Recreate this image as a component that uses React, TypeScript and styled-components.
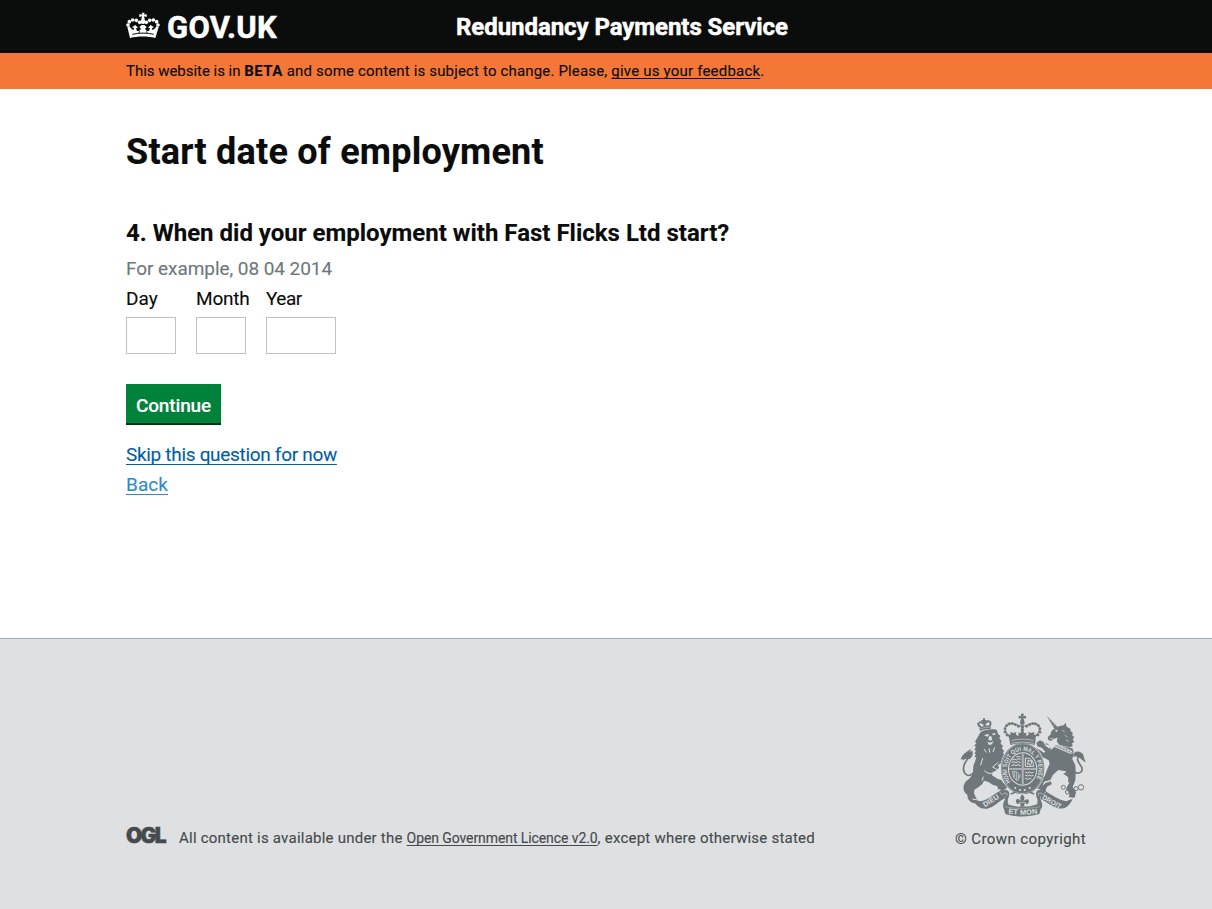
import React from "react";
import styled, { createGlobalStyle } from "styled-components";

const GlobalStyle = createGlobalStyle`
  * { box-sizing: border-box; }
  body {
    margin: 0;
    background: #fff;
    color: #0b0c0c;
    font-family: Roboto, "Liberation Sans", sans-serif;
    -webkit-text-stroke: 0.12px;
  }
`;

const Page = styled.div`
  display: flex;
  flex-direction: column;
  min-height: 909px;
`;

const Container = styled.div`
  width: 960px;
  margin: 0 auto;
`;

const Header = styled.header`
  height: 53px;
  background: #0b0c0c;
  color: #fff;
`;

const HeaderInner = styled(Container)`
  display: grid;
  grid-template-columns: 330px 1fr;
  align-items: center;
  height: 53px;
  padding-top: 2px;
`;

const Brand = styled.a`
  display: flex;
  align-items: center;
  gap: 7px;
  color: inherit;
  text-decoration: none;
  font-size: 31px;
  font-weight: 700;
  letter-spacing: 0.3px;
  line-height: 51px;
  white-space: nowrap;
  -webkit-text-stroke: 0.5px;

  svg {
    margin-bottom: 4px;
  }
`;

const ServiceName = styled.div`
  font-size: 24px;
  font-weight: 700;
  letter-spacing: -0.06px;
  line-height: 51px;
  white-space: nowrap;
  -webkit-text-stroke: 0.5px;
`;

const BetaBanner = styled.div`
  height: 36px;
  background: #f47738;
  font-size: 15px;
  line-height: 36px;
  letter-spacing: 0.16px;
  white-space: nowrap;

  strong {
    letter-spacing: 0.5px;
  }
`;

const Lead = styled.span`
  letter-spacing: -0.03px;
`;

const BannerLink = styled.a`
  color: inherit;
  letter-spacing: 0.2px;
  text-decoration: underline 1px;
  text-underline-offset: 2px;
  text-decoration-skip-ink: none;
`;

const Main = styled.main`
  flex: 1;
  padding-top: 43px;
`;

const Title = styled.h1`
  margin: 0 0 46px;
  font-size: 36px;
  font-weight: 700;
  line-height: 40px;
  letter-spacing: 0.22px;
`;

const Question = styled.h2`
  margin: 0 0 6px;
  font-size: 24px;
  font-weight: 700;
  line-height: 30px;
`;

const Hint = styled.p`
  margin: 0;
  color: #6f777b;
  font-size: 19px;
  line-height: 30px;
  letter-spacing: -0.06px;
`;

const DateFields = styled.div`
  display: flex;
  gap: 20px;
  margin-bottom: 30px;
`;

const Field = styled.label<{ $width: number; $tracking: number }>`
  display: flex;
  flex-direction: column;
  gap: 3px;
  width: ${(p) => p.$width}px;
  font-size: 19px;
  line-height: 30px;
  letter-spacing: ${(p) => p.$tracking}px;
  white-space: nowrap;
`;

const DateInput = styled.input`
  width: 100%;
  height: 37px;
  padding: 5px;
  border: 1px solid #bfc1c3;
  border-radius: 0;
  background: #fff;
  font: inherit;
`;

const ContinueButton = styled.button`
  display: block;
  width: 95px;
  height: 41px;
  margin: 0 0 15px;
  padding: 3px 0 0;
  border: 0;
  background: #00823b;
  box-shadow: inset 0 -2px 0 #003618;
  color: #fff;
  font-family: inherit;
  font-size: 19px;
  font-weight: 500;
  letter-spacing: -0.16px;
  line-height: 38px;
`;

const Actions = styled.nav`
  display: flex;
  flex-direction: column;
  align-items: flex-start;
`;

const ActionLink = styled.a<{ $color: string; $tracking: number }>`
  color: ${(p) => p.$color};
  font-size: 19px;
  line-height: 30px;
  letter-spacing: ${(p) => p.$tracking}px;
  text-decoration: underline 1px;
  text-underline-offset: 3px;
  text-decoration-skip-ink: none;
`;

const Footer = styled.footer`
  height: 271px;
  padding-top: 69px;
  border-top: 1px solid #a1acb2;
  background: #dee0e2;
  color: #454a4c;
  font-size: 15px;
  line-height: 20px;
`;

const FooterInner = styled(Container)`
  display: flex;
  justify-content: space-between;
  align-items: flex-end;
  white-space: nowrap;
`;

const Licence = styled.div`
  display: flex;
  align-items: baseline;
  letter-spacing: 0.23px;
  padding-bottom: 1px;
`;

const OglMark = styled.span`
  width: 53px;
  font-family: Inter, sans-serif;
  font-size: 21px;
  font-weight: 900;
  letter-spacing: -1.7px;
  line-height: 20px;
  -webkit-text-stroke: 0.5px #454a4c;
`;

const LicenceLink = styled.a`
  color: inherit;
  font-size: 14px;
  letter-spacing: -0.09px;
  text-decoration: underline 1px;
  text-underline-offset: 2px;
  text-decoration-skip-ink: none;
`;

const Copyright = styled.div`
  display: flex;
  flex-direction: column;
  align-items: flex-end;
  gap: 9px;
  letter-spacing: 0.4px;

  svg {
    margin-right: -4px;
  }
`;

const dots = (points: number[][], r: number, fill?: string) =>
  points.map(([x, y], i) => <circle key={i} cx={x} cy={y} r={r} fill={fill} />);

function CrownIcon() {
  return (
    <svg width="34" height="27" viewBox="0 0 102 81" fill="#fff">
      <path d="M47 2h9l-2 6 8-2v9l-8-2 2 8H46l2-8-8 2V6l9 2z" />
      <rect x="46" y="20" width="10" height="14" rx="4" />
      <circle cx="51" cy="29" r="7" />
      {dots([[41, 31], [31, 25], [20, 24], [10, 29], [6, 39], [61, 31], [71, 25], [82, 24], [92, 29], [96, 39]], 5.5)}
      <path d="M4 45l7-2c3 7 7 10 12 11l1-6-6-2 10-7 8 8-6 2 3 8c5 1 9-1 12-7l-5-5 7-6h8l7 6-5 5c3 6 7 8 12 7l3-8-6-2 8-8 10 7-6 2 1 6c5-1 9-4 12-11l7 2-10 33c-22-6-54-6-76 0z" />
      <path d="M19 67c20-5 44-5 64 0" fill="none" stroke="#0b0c0c" strokeWidth="3" />
      <path d="M36 62l4-5 3 4zM66 62l-4-5-3 4z" fill="#0b0c0c" />
    </svg>
  );
}

const INK = "#6f777b";
const PAPER = "#dee0e2";

function Lion() {
  return (
    <g>
      <path d="M58 182c-4 16-17 25-27 18-13-10-10-28 0-42 4-6 7-13 8-22" fill="none" stroke={INK} strokeWidth="5" />
      <path d="M14 155c3-13 12-22 33-33l-7 9 9-3c4 12-1 20-9 25-6 2-12-4-19 5 0-4-2-5-7-3z" />
      <path d="M74 72c14-8 31-10 48-7l4 12 7 7-3 7 7 9-4 5 8 10-4 6 7 7-3 8 6 5 1 11-8 11-14 8 3 8-9 9-10 4-2 10 16 10 12 4 6 9 11 7-1 9-11 6-15-3-2-9-14-5-14-9-12-3-5 10-12 10-12 7-1 11 6 14 9 10-6 8-18-5-9-10-2-12-8-8c-6-11-4-23 4-33 10-7 17-14 21-25l1-21 6-16 3-11-6 1 5-10-5-1 5-9-5-3 5-8-5-4 6-7-4-5z" />
      <path d="M84 82l10-4 6 3-6 5zM107 78l8-3 5 3-7 4z" fill={PAPER} />
      <path d="M99 85l7 0 3 10-6 3-6-3zM94 101l9 3 9-5-4 10-9 2z" fill={PAPER} />
      <path d="M127 163l-17 14 15 9 18-13M84 123l7 10M99 121l2 13M116 118l-5 14M80 150l-6 22M85 188c8 8 15 9 25 8M82 206l-4 12" stroke={PAPER} strokeWidth="3" fill="none" />
      <path d="M70 59c9-5 22-8 34-7v11c-12-1-23 1-32 6z" />
      <path d="M73 63c9-4 19-6 29-6" stroke={PAPER} strokeWidth="1.500" fill="none" />
      <path d="M75 58c-12-10-6-18 3-14l7 5 8-7c10-4 14 3 9 12" fill="none" stroke={INK} strokeWidth="4.500" />
      {dots([[68, 53], [66, 47], [72, 43], [78, 44], [91, 41], [97, 39], [103, 43], [103, 49]], 3)}
      <path d="M81 31h6v5h5v5h-5l3 15h-7l-2-15h-5v-5h5z" />
    </g>
  );
}

function Unicorn() {
  return (
    <g>
      <path d="M272 23l33 34-9 6z" />
      <path d="M283 32l-3 3M289 40l-3 4M296 48l-4 5" stroke={PAPER} strokeWidth="1.5" />
      <path d="M293 64l15-9 15-3 6-8 3 12 11 6 1 8 7 5-3 6 7 7-5 6 5 8-7 4 2 9-9 3-31-7-8-11 3-11-13 4-7 6-8-3-2-8 8-8 4-12z" />
      <path d="M298 68l6-2-2 5zM281 92l11-1M318 66l8 6M326 81l8 6M330 96l8 4" fill={PAPER} stroke={PAPER} strokeWidth="2" />
      <path d="M302 111l47 10 4 10-4 23 9 17 1 20-7 17-4 16-12-2 3-18-10-14-22-4-16 14-8 16-19 5-6 20-11 3-7-9 7-8 6-15 13-7 8-22 7-16-3-10-14-8-14-2-6-11-14-3-2-9 13-5 14 9 8 6 6-2-12-13-13-4-3-11 11-7 11 5 2 9 20 14z" />
      <path d="M268 225l17-5 2 9-14 7-5 14-14 2-2-9zM338 188l21 8-1 21-8 20 10 16-4 16-17-1 1-12-10-14 10-18-4-17-14-10z" />
      <path d="M298 107l49 22M295 116l48 20" fill="none" stroke={PAPER} strokeWidth="2.500" />
      {dots([[300, 113], [309, 117], [318, 121], [327, 125], [336, 129], [345, 133]], 4.2, PAPER)}
      {dots([[300, 113], [309, 117], [318, 121], [327, 125], [336, 129], [345, 133]], 2)}
      <path d="M355 192c17 10 29-4 20-18-8-12-15-20-6-30" fill="none" stroke={INK} strokeWidth="5" />
      <path d="M350 146c3-15 14-20 26-12 9 4 5 14 14 29-10-3-15-12-24-16-7-3-11-1-16-1z" />
      <g fill="none" stroke={INK} strokeWidth="3">
        <circle cx="322" cy="238" r="6" />
        <circle cx="334" cy="252" r="6" />
        <circle cx="360" cy="242" r="6" />
        <circle cx="375" cy="238" r="8" />
        <path d="M279 112a9 9 0 1 0-13 12M283 119a9 9 0 0 1-10 10" />
      </g>
    </g>
  );
}

function ShieldAndGarter() {
  return (
    <g>
      <ellipse cx="200" cy="182" rx="67" ry="79" fill={PAPER} />
      <ellipse cx="200" cy="182" rx="65" ry="77" />
      <ellipse cx="200" cy="182" rx="62.500" ry="74.500" fill="none" stroke={PAPER} strokeWidth="1.200" />
      <ellipse cx="200" cy="183" rx="44" ry="50" fill={PAPER} />
      <ellipse cx="200" cy="183" rx="41" ry="47" />
      <path d="M200 137v92M160 183h80" stroke={PAPER} strokeWidth="5" />
      <path d="M200 137v92M160 183h80" stroke={INK} strokeWidth="1.5" />
      <g fill="none" stroke={PAPER} strokeWidth="3">
        <path d="M169 156l6-3 6 3 5-4 8 2M167 164l7-3 6 3 6-3 8 3M166 173l8-3 6 3 6-3 8 3M181 147l6-2 6 2" />
        <path d="M208 150v25M208 151c17-3 24 8 25 24h-25" />
        <path d="M214 169l3-8-2-4 6 2 4-2 2 9-4 6-3-5z" />
        <path d="M169 191h13l11 12-9 16-11-11zM175 193v15M181 193v22M187 199v14" strokeWidth="2.2" />
        <path d="M207 192l7 3 6-3 6 3 7-2M207 201l7 3 6-3 6 3 6-2M207 211l7 3 6-3 6 2" />
      </g>
      <path id="garterPath" d="M164 222A47.500 57 0 1 1 236 222" fill="none" />
      <text fontSize="18" fontWeight="700" fill={PAPER} fontFamily="Liberation Sans, sans-serif">
        <textPath href="#garterPath" textLength="232" lengthAdjust="spacingAndGlyphs">HONI SOIT QUI MAL Y PENSE</textPath>
      </text>
      <g fill={PAPER}>{dots([[178, 240], [192, 246], [206, 246], [221, 240]], 3)}</g>
    </g>
  );
}

function RoyalCrown() {
  return (
    <g>
      <path d="M194 17h10l-2 8 8-2v9l-8-2 3 9h-12l3-9-8 2v-9l8 2z" />
      <circle cx="199" cy="44" r="7" />
      <path d="M166 92c-31-28-17-50 3-46 13 2 21 9 30 8 9 1 17-6 30-8 20-4 34 18 3 46" fill="none" stroke={INK} strokeWidth="3" />
      {dots([[153, 81], [147, 72], [147, 62], [152, 53], [160, 48], [169, 47], [178, 50], [187, 55], [246, 81], [252, 72], [252, 62], [247, 53], [239, 48], [230, 47], [221, 50], [212, 55]], 4.3)}
      {dots([[199, 57], [199, 65], [199, 73]], 5)}
      <path d="M161 95l-6-17 9 3-1-9 10 3 8-3-1 9 8 2-1-9 12 2 12-2-1 9 8-2-1-9 8 3 10-3-1 9 9-3-6 17c-25-7-51-7-76 0z" />
      <path d="M160 94c26-8 53-8 79 0l-3 17c-23-7-50-7-73 0z" />
      <path d="M166 98c22-6 45-6 67 0M166 106c22-5 45-5 67 0" fill="none" stroke={PAPER} strokeWidth="1.800" />
    </g>
  );
}

function MottoRibbon() {
  return (
    <g>
      <path d="M49 273l22 4c24-4 39-21 60-32" fill="none" stroke={PAPER} strokeWidth="3" />
      <path d="M52 276l20 4c24-4 39-21 60-32l16 22c-18 8-33 27-54 32-20 2-34-8-42-26z" />
      <path d="M350 272l-20 8c-22-4-41-19-62-30l-16 22c18 8 33 22 54 29 20 4 36-8 44-29z" />
      <path d="M128 250c19-9 33-4 32 9-1 12-8 13-3 30l-13 14c-9-20 8-28 3-37l-8 2zM272 250c-19-9-33-4-32 9 1 12 8 13 3 30l13 14c9-20-8-28-3-37l8 2z" />
      <path d="M141 257c9-4 14-1 12 6M259 257c-9-4-14-1-12 6M140 262l-11-12M260 262l11-12" stroke={PAPER} strokeWidth="2" fill="none" />
      <path d="M142 296l12-7c28 10 62 10 90 0l12 7-6 22c-32 10-70 10-102 0z" />
      <path d="M146 296c34 7 70 7 106 0" fill="none" stroke={PAPER} strokeWidth="1.200" />
      <g fill={PAPER} fontFamily="Liberation Sans, sans-serif" fontWeight="700">
        <text transform="translate(87 298) rotate(-33)" fontSize="22" textLength="52" lengthAdjust="spacingAndGlyphs">DIEU</text>
        <path id="mottoPath" d="M152 316q49 8 99 0" fill="none" />
        <text fontSize="22">
          <textPath href="#mottoPath" textLength="88" lengthAdjust="spacingAndGlyphs" startOffset="5">ET MON</textPath>
        </text>
        <text transform="translate(257 272) rotate(30)" fontSize="21" textLength="62" lengthAdjust="spacingAndGlyphs">DROIT</text>
      </g>
      <path d="M182 262l17-6 17 6v24l-17 12-17-12z" fill={PAPER} />
      <path d="M199 259c8 8 8 14 2 22 12-13 22-8 16 5-5 5-8 1-9-1l-5 6h-7l-5-6c-1 3-6 5-10 0-5-13 5-17 16-5-6-8-6-13 2-21z" />
      <path d="M188 284h22" stroke={PAPER} strokeWidth="1.800" />
      <path d="M195 286h8l3 10h-14z" />
      <path d="M164 258l14-5M235 258l-14-5" stroke={INK} strokeWidth="5" />
    </g>
  );
}

function RoyalArms() {
  return (
    <svg width="134" height="112" viewBox="0 0 402 336" fill={INK} strokeWidth="0">
      <Lion />
      <Unicorn />
      <ShieldAndGarter />
      <RoyalCrown />
      <MottoRibbon />
    </svg>
  );
}

export default function App() {
  return (
    <Page>
      <GlobalStyle />
      <Header>
        <HeaderInner>
          <Brand href="#">
            <CrownIcon />
            <span>GOV.UK</span>
          </Brand>
          <ServiceName>Redundancy Payments Service</ServiceName>
        </HeaderInner>
      </Header>
      <BetaBanner>
        <Container>
          <Lead>This website is in </Lead>
          <strong>BETA</strong> and some content is subject to change. Please,{" "}
          <BannerLink href="#">give us your feedback</BannerLink>.
        </Container>
      </BetaBanner>
      <Main>
        <Container>
          <Title>Start date of employment</Title>
          <Question>4. When did your employment with Fast Flicks Ltd start?</Question>
          <Hint>For example, 08 04 2014</Hint>
          <DateFields>
            <Field $width={50} $tracking={0}>Day<DateInput /></Field>
            <Field $width={50} $tracking={-0.2}>Month<DateInput /></Field>
            <Field $width={70} $tracking={-0.5}>Year<DateInput /></Field>
          </DateFields>
          <ContinueButton type="button">Continue</ContinueButton>
          <Actions>
            <ActionLink href="#" $color="#005ea5" $tracking={-0.31}>Skip this question for now</ActionLink>
            <ActionLink href="#" $color="#2e8aca" $tracking={0.06}>Back</ActionLink>
          </Actions>
        </Container>
      </Main>
      <Footer>
        <FooterInner>
          <Licence>
            <OglMark>OGL</OglMark>
            <span>
              All content is available under the{" "}
              <LicenceLink href="#">Open Government Licence v2.0</LicenceLink>, except where otherwise stated
            </span>
          </Licence>
          <Copyright>
            <RoyalArms />
            <span>© Crown copyright</span>
          </Copyright>
        </FooterInner>
      </Footer>
    </Page>
  );
}
